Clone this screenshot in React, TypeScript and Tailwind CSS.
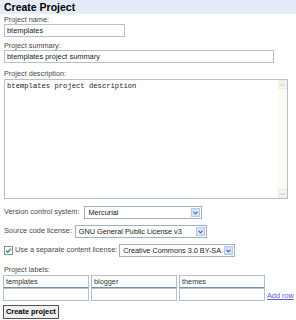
import React from 'react';

const sans = { fontFamily: '"Liberation Sans", Arial, sans-serif' };

function Arrow() {
  return (
    <div className="flex h-full w-[9px] shrink-0 items-center justify-center border border-[#b8c8f0] bg-[#d6e2fb]">
      <svg width="5" height="4" viewBox="0 0 5 4">
        <path d="M0.5 0.8 L2.5 2.8 L4.5 0.8" fill="none" stroke="#4d6185" strokeWidth="1.1" />
      </svg>
    </div>
  );
}

function Select({ value, width }: { value: string; width: string }) {
  return (
    <div className={`flex h-[13px] shrink-0 items-center border border-[#9fb0c2] bg-white py-[1px] pl-[3px] pr-[1px] ${width}`}>
      <span className="flex-1 overflow-hidden whitespace-nowrap leading-[10px] text-[#222]">{value}</span>
      <Arrow />
    </div>
  );
}

function Field({ value, className }: { value: string; className: string }) {
  return (
    <input
      readOnly
      value={value}
      className={`h-[13px] border border-[#b3c1cf] bg-white px-[2px] text-[7.4px] leading-[11px] text-[#222] outline-none ${className}`}
      style={sans}
    />
  );
}

function LabelCell({ value, top }: { value: string; top?: boolean }) {
  return (
    <div
      className={`h-[13px] w-[86px] border border-[#b3c1cf] px-[2px] leading-[11px] text-[#333] ${
        top ? 'border-b-[#6f8fae]' : ''
      }`}
    >
      {value}
    </div>
  );
}

export default function App() {
  return (
    <div className="h-[320px] w-[296px] overflow-hidden bg-white text-[7.3px] text-[#484848]" style={sans}>
      <div className="h-[14px] bg-[#e5ecf9] px-[4px] text-[10.5px] font-bold leading-[14px] text-black">
        Create Project
      </div>

      <div className="flex flex-col px-[4px]">
        <div className="mt-[2px] leading-[8px]">Project name:</div>
        <Field value="btemplates" className="w-[121px]" />

        <div className="mt-[5px] leading-[8px]">Project summary:</div>
        <Field value="btemplates project summary" className="w-[270px]" />

        <div className="mt-[6px] leading-[10px]">Project description:</div>
        <div className="flex h-[120px] w-[284px] border border-[#b3c1cf] bg-white">
          <div
            className="flex-1 px-[2px] pt-[2px] text-[7.2px] leading-[9px] text-[#222]"
            style={{ fontFamily: '"Liberation Mono", "Courier New", monospace' }}
          >
            btemplates project description
          </div>
          <div className="flex w-[9px] flex-col justify-between bg-[#fbfbf6]">
            <div className="flex h-[9px] items-center justify-center border border-[#ecece4] bg-[#f4f4ee]">
              <svg width="5" height="4" viewBox="0 0 5 4">
                <path d="M0.5 3 L2.5 1 L4.5 3" fill="none" stroke="#c5c5bc" strokeWidth="1" />
              </svg>
            </div>
            <div className="flex h-[9px] items-center justify-center border border-[#ecece4] bg-[#f4f4ee]">
              <svg width="5" height="4" viewBox="0 0 5 4">
                <path d="M0.5 1 L2.5 3 L4.5 1" fill="none" stroke="#c5c5bc" strokeWidth="1" />
              </svg>
            </div>
          </div>
        </div>

        <div className="mt-[7px] flex items-center gap-[5px] whitespace-nowrap">
          <span>Version control system:</span>
          <Select value="Mercurial" width="w-[118px]" />
        </div>

        <div className="mt-[6px] flex items-center gap-[3px] whitespace-nowrap">
          <span>Source code license:</span>
          <Select value="GNU General Public License v3" width="w-[132px]" />
        </div>

        <div className="mt-[6px] flex items-center gap-[2px] whitespace-nowrap">
          <svg width="9" height="9" viewBox="0 0 9 9" className="shrink-0">
            <rect x="0.5" y="0.5" width="8" height="8" fill="#fff" stroke="#7d92ab" />
            <path d="M2 4.5 L3.8 6.3 L7 2.6" fill="none" stroke="#2f9a2f" strokeWidth="1.3" />
          </svg>
          <span>Use a separate content license:</span>
          <Select value="Creative Commons 3.0 BY-SA" width="w-[116px]" />
        </div>

        <div className="mt-[8px] leading-[10px]">Project labels:</div>
        <div className="flex items-end gap-[2px] whitespace-nowrap">
          <div className="-ml-[1px] grid shrink-0 grid-cols-3 gap-x-[2px]">
            <LabelCell value="templates" top />
            <LabelCell value="blogger" top />
            <LabelCell value="themes" top />
            <LabelCell value="" />
            <LabelCell value="" />
            <LabelCell value="" />
          </div>
          <a className="mb-[1px] leading-[9px] text-[#5b5bd6] underline">Add row</a>
        </div>

        <div className="mt-[4px]">
          <button
            className="-ml-[1px] h-[14px] border border-[#555] bg-[#f0f0f0] px-[2px] text-[7.4px] font-bold leading-[12px] text-black"
            style={sans}
          >
            Create project
          </button>
        </div>
      </div>
    </div>
  );
}
